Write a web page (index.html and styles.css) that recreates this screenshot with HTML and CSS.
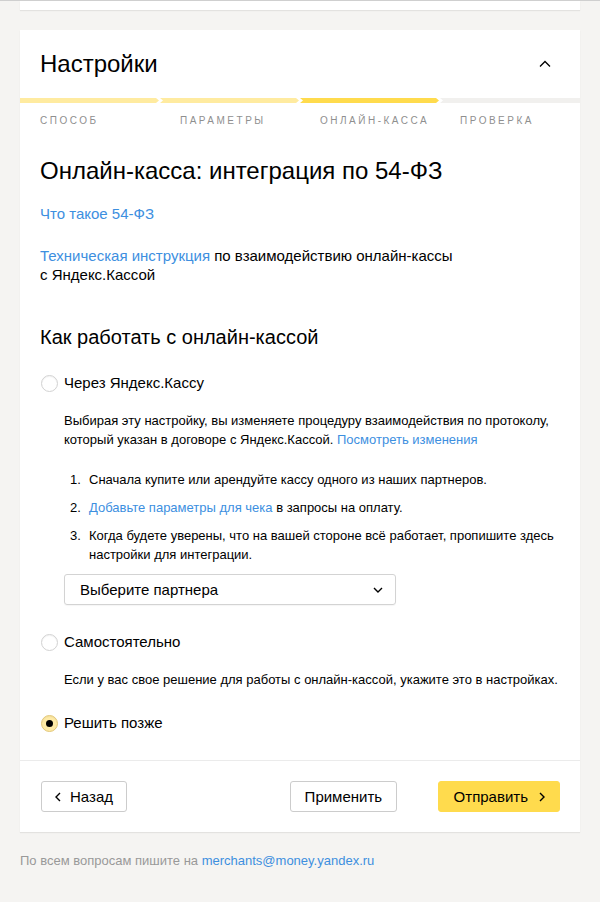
FILE: index.html
```html
<!DOCTYPE html>
<html lang="ru">
<head>
<meta charset="utf-8">
<title>Настройки</title>
<link rel="stylesheet" href="styles.css">
</head>
<body>
<div class="topline"></div>
<div class="page">
  <div class="card card-prev"></div>
  <section class="card">
    <header class="card-header">
      <h1 class="card-title">Настройки</h1>
      <svg class="icon-collapse" width="12" height="8" viewBox="0 0 12 8"><path d="M1 6.5 L6 1.5 L11 6.5" fill="none" stroke="#000" stroke-width="1.3"/></svg>
    </header>
    <div class="progress">
      <div class="seg seg-first seg-done"></div>
      <div class="seg seg-done"></div>
      <div class="seg seg-current"></div>
      <div class="seg seg-last"></div>
    </div>
    <div class="steps">
      <span class="step">Способ</span>
      <span class="step">Параметры</span>
      <span class="step">Онлайн-касса</span>
      <span class="step">Проверка</span>
    </div>
    <div class="content">
      <h2 class="title">Онлайн-касса: интеграция по 54-ФЗ</h2>
      <p class="link-line"><a class="link" href="#">Что такое 54-ФЗ</a></p>
      <p class="text"><a class="link" href="#">Техническая инструкция</a> по взаимодействию онлайн-кассы<br>с Яндекс.Кассой</p>
      <h3 class="subtitle">Как работать с онлайн-кассой</h3>

      <div class="radio-row radio-first"><span class="radio"></span><span>Через Яндекс.Кассу</span></div>
      <div class="option-body">
        <p class="desc">Выбирая эту настройку, вы изменяете процедуру взаимодействия по протоколу, который указан в договоре с Яндекс.Кассой. <a class="link" href="#">Посмотреть изменения</a></p>
        <ol class="list">
          <li><span class="num">1.</span><span>Сначала купите или арендуйте кассу одного из наших партнеров.</span></li>
          <li><span class="num">2.</span><span><a class="link" href="#">Добавьте параметры для чека</a> в запросы на оплату.</span></li>
          <li><span class="num">3.</span><span>Когда будете уверены, что на вашей стороне всё работает, пропишите здесь настройки для интеграции.</span></li>
        </ol>
        <div class="select">
          <span>Выберите партнера</span>
          <svg width="10" height="6" viewBox="0 0 10 6"><path d="M1 1 L5 5 L9 1" fill="none" stroke="#000" stroke-width="1.4"/></svg>
        </div>
      </div>

      <div class="radio-row radio-second"><span class="radio"></span><span>Самостоятельно</span></div>
      <div class="option-body">
        <p class="desc">Если у вас свое решение для работы с онлайн-кассой, укажите это в настройках.</p>
      </div>

      <div class="radio-row radio-third"><span class="radio radio-checked"></span><span>Решить позже</span></div>
    </div>
    <footer class="card-footer">
      <button class="btn btn-back" type="button">
        <svg width="6" height="10" viewBox="0 0 6 10"><path d="M5 1 L1 5 L5 9" fill="none" stroke="#000" stroke-width="1.4"/></svg>
        <span>Назад</span>
      </button>
      <button class="btn btn-apply" type="button">Применить</button>
      <button class="btn btn-send" type="button">
        <span>Отправить</span>
        <svg width="6" height="10" viewBox="0 0 6 10"><path d="M1 1 L5 5 L1 9" fill="none" stroke="#000" stroke-width="1.4"/></svg>
      </button>
    </footer>
  </section>
  <p class="contact">По всем вопросам пишите на <a class="link" href="#">merchants@money.yandex.ru</a></p>
</div>
</body>
</html>
```

FILE: styles.css
```css
html, body {
  margin: 0;
  padding: 0;
}

body {
  background: #f5f4f2;
  font-family: "Liberation Sans", Arial, sans-serif;
  color: #000;
}

.topline {
  height: 1px;
  background: #cfcfcf;
}

.page {
  padding: 0 20px;
}

.card {
  background: #fff;
  box-shadow: 0 1px 1px rgba(0, 0, 0, 0.07);
}

.card-prev {
  height: 9px;
  margin-bottom: 20px;
}

.card-header {
  height: 68px;
  display: flex;
  align-items: center;
  justify-content: space-between;
  padding: 0 29px 0 20px;
}

.card-title {
  margin: 0;
  font-size: 24px;
  line-height: 28px;
  font-weight: normal;
}

.icon-collapse {
  display: block;
}

.progress {
  display: flex;
  height: 5px;
}

.seg {
  width: 140px;
  flex: none;
  clip-path: polygon(0 0, calc(100% - 4px) 0, calc(100% - 1px) 50%, calc(100% - 4px) 100%, 0 100%, 3px 50%);
}

.seg-first {
  clip-path: polygon(0 0, calc(100% - 4px) 0, calc(100% - 1px) 50%, calc(100% - 4px) 100%, 0 100%);
}

.seg-last {
  clip-path: polygon(0 0, 100% 0, 100% 100%, 0 100%, 3px 50%);
  background: #f1f0ee;
}

.seg-done {
  background: #ffeba0;
}

.seg-current {
  background: #ffdb4d;
}

.steps {
  display: flex;
  padding-top: 12px;
}

.step {
  width: 140px;
  box-sizing: border-box;
  padding-left: 20px;
  font-size: 10px;
  line-height: 12px;
  letter-spacing: 2.5px;
  text-transform: uppercase;
  color: #8f8f8f;
}

.content {
  padding: 0 20px 27px;
}

.title {
  margin: 30px 0 0;
  font-size: 24px;
  line-height: 28px;
  font-weight: normal;
}

.link {
  color: #3d8fdf;
  text-decoration: none;
}

.link-line {
  margin: 19px 0 0;
  font-size: 15px;
  line-height: 20px;
}

.text {
  margin: 22px 0 0;
  font-size: 15px;
  line-height: 19px;
}

.subtitle {
  margin: 41px 0 0;
  font-size: 20px;
  line-height: 24px;
  font-weight: normal;
}

.radio-row {
  display: flex;
  align-items: center;
  gap: 6px;
  font-size: 15px;
  line-height: 20px;
}

.radio-first {
  margin-top: 24px;
}

.radio-second {
  margin-top: 27px;
}

.radio-third {
  margin-top: 24px;
}

.radio {
  flex: none;
  width: 17px;
  height: 17px;
  margin-left: 1px;
  box-sizing: border-box;
  border-radius: 50%;
  border: 1px solid #d2d2d2;
  background: #fff;
  box-shadow: inset 0 1px 1px rgba(0, 0, 0, 0.05);
  position: relative;
}

.radio-checked {
  background: #feeaa6;
  border-color: #e2c77a;
}

.radio-checked::after {
  content: "";
  position: absolute;
  left: 50%;
  top: 50%;
  width: 7px;
  height: 7px;
  margin: -3.5px 0 0 -3.5px;
  border-radius: 50%;
  background: #000;
}

.option-body {
  padding-left: 24px;
}

.desc {
  margin: 18px 0 0;
  font-size: 13px;
  line-height: 19px;
}

.list {
  margin: 21px 0 0;
  padding: 0;
  list-style: none;
  font-size: 13px;
  line-height: 19px;
}

.list li {
  display: flex;
  margin-top: 9px;
}

.list li:first-child {
  margin-top: 0;
}

.num {
  flex: none;
  width: 25px;
  padding-left: 6px;
  box-sizing: border-box;
}

.select {
  margin-top: 10px;
  width: 332px;
  height: 31px;
  box-sizing: border-box;
  border: 1px solid #d3d3d3;
  border-radius: 3px;
  box-shadow: 0 1px 1px rgba(0, 0, 0, 0.04);
  display: flex;
  align-items: center;
  justify-content: space-between;
  padding: 0 12px 0 15px;
  font-size: 15px;
}

.select svg {
  display: block;
}

.card-footer {
  border-top: 1px solid #ebebeb;
  padding: 20px 20px 20px 21px;
  display: flex;
  align-items: center;
}

.btn {
  height: 31px;
  box-sizing: border-box;
  border: 1px solid #cccccc;
  border-radius: 3px;
  background: #fff;
  font-family: "Liberation Sans", Arial, sans-serif;
  font-size: 15px;
  color: #000;
  display: inline-flex;
  align-items: center;
  margin: 0;
}

.btn svg {
  display: block;
}

.btn-back {
  padding: 0 13px;
  gap: 9px;
}

.btn-apply {
  margin-left: auto;
  padding: 0 13.5px;
}

.btn-send {
  margin-left: 41px;
  padding: 0 14px 0 15px;
  gap: 11px;
  background: #ffdb4d;
  border-color: #ffdb4d;
}

.contact {
  margin: 20px 0 0;
  font-size: 13px;
  line-height: 18px;
  color: #999;
}
```
